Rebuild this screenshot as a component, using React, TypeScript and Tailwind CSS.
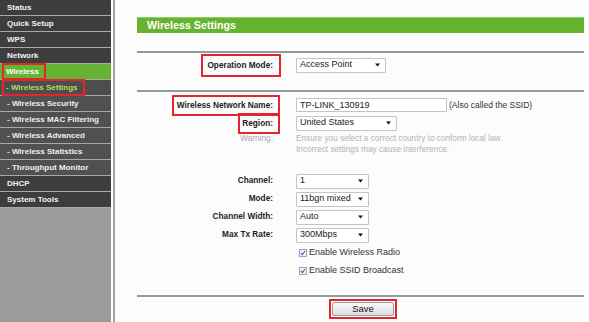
import React from 'react';

const font = { fontFamily: '"Liberation Sans", Arial, sans-serif' };

type NavItem = { label: string; sub?: boolean; active?: boolean; current?: boolean; boxed?: boolean };

const nav: NavItem[] = [
    { label: 'Status' },
    { label: 'Quick Setup' },
    { label: 'WPS' },
    { label: 'Network' },
    { label: 'Wireless', active: true, boxed: true },
    { label: '- Wireless Settings', sub: true, current: true, boxed: true },
    { label: '- Wireless Security', sub: true },
    { label: '- Wireless MAC Filtering', sub: true },
    { label: '- Wireless Advanced', sub: true },
    { label: '- Wireless Statistics', sub: true },
    { label: '- Throughput Monitor', sub: true },
    { label: 'DHCP' },
    { label: 'System Tools' },
];

const Sidebar: React.FC = () => (
    <div className="w-[111px] h-[322px] bg-[#9b9b9b] flex flex-col shrink-0">
        {nav.map((item) => {
            let bg = 'bg-[#3d3d3d] text-[#f2f2f2]';
            if (item.active) bg = 'bg-[#66b232] text-white';
            else if (item.current) bg = 'bg-[#4d4d4d] text-[#b9dc62]';
            else if (item.sub) bg = 'bg-[#505050] text-[#efefef]';
            return (
                <div key={item.label} className={`h-[16px] border-b border-[#a8a8a8] pl-[7px] flex items-center text-[8px] font-bold ${bg}`}>
                    {item.boxed ? (
                        <span className="inline-block -ml-[3px] pl-[2px] pr-[5px] leading-[13px] outline-2 outline-[#e3262e]">
                            {item.label}
                        </span>
                    ) : (
                        <span className="leading-[15px]">{item.label}</span>
                    )}
                </div>
            );
        })}
    </div>
);

const Arrow: React.FC = () => (
    <svg width="5" height="4" viewBox="0 0 5 4" className="shrink-0">
        <path d="M0 0.5h5L2.5 3.5z" fill="#111" />
    </svg>
);

const Select: React.FC<{ value: string; w: string }> = ({ value, w }) => (
    <div className={`${w} h-[15px] border border-[#c4c4c4] bg-white flex items-center justify-between pl-[3px] pr-[5px] text-[9px] text-[#222] rounded-[1px]`}>
        <span>{value}</span>
        <Arrow />
    </div>
);

const Check: React.FC<{ label: string }> = ({ label }) => (
    <div className="flex items-center gap-[2px] text-[9px] text-[#333] pl-[3px]">
        <div className="w-[8px] h-[8px] border border-[#9aa7b5] bg-[#eef2f7] flex items-center justify-center">
            <svg width="6" height="6" viewBox="0 0 6 6">
                <path d="M1 3.2l1.3 1.5L5 1" stroke="#2a5db0" strokeWidth="1.1" fill="none" />
            </svg>
        </div>
        <span>{label}</span>
    </div>
);

const Row: React.FC<{ label?: React.ReactNode; h: string; children?: React.ReactNode }> = ({ label, h, children }) => (
    <div className={`flex items-center ${h}`}>
        <div className="w-[136px] text-right text-[8.25px] font-bold text-[#222]">{label}</div>
        <div className="pl-[23px] flex items-center">{children}</div>
    </div>
);

const Boxed: React.FC<{ children: React.ReactNode; cls: string }> = ({ children, cls }) => (
    <span className={`inline-block outline-2 outline-[#e3262e] leading-[11px] ${cls}`}>{children}</span>
);

export default function App() {
    return (
        <div className="w-[589px] h-[322px] flex overflow-hidden bg-[#fcfcfc]" style={font}>
            <Sidebar />
            <div className="w-[2px] h-full bg-white" />
            <div className="w-[2px] h-full bg-[#a3a3a3]" />
            <div className="flex-1 pl-[22px] pr-[5px] pt-[17px]">
                <div className="h-[16px] bg-[#67b32f] border-t border-[#8fcf5f] flex items-center pl-[10px] text-[10.7px] font-bold text-white">
                    Wireless Settings
                </div>
                <div className="mt-[18px] h-[2px] bg-[#8d9d99]" />

                <div className="mt-[2px]">
                    <Row h="h-[20px]" label={<Boxed cls="px-[4px] py-[4px] -mr-[6px] pr-[6px]">Operation Mode:</Boxed>}>
                        <Select value="Access Point" w="w-[90px]" />
                    </Row>
                </div>

                <div className="mt-[15px] h-[2px] bg-[#8d9d99]" />

                <div className="mt-[4px]">
                    <Row h="h-[18px]" label={<Boxed cls="pl-[3px] pr-[5px] py-[3px] -mr-[5px]">Wireless Network Name:</Boxed>}>
                        <div className="w-[151px] h-[14px] border border-[#c4c4c4] bg-white pl-[3px] text-[9px] text-[#222] leading-[12px]">
                            TP-LINK_130919
                        </div>
                        <span className="ml-[2px] text-[8.5px] text-[#333]">(Also called the SSID)</span>
                    </Row>
                    <Row h="h-[18px]" label={<Boxed cls="pl-[2px] pr-[5px] py-[3px] -mr-[5px]">Region:</Boxed>}>
                        <Select value="United States" w="w-[101px]" />
                    </Row>
                    <div className="flex mt-[1px]">
                        <div className="w-[136px] text-right text-[8.25px] text-[#a9a9a9] leading-[11px]">Warning:</div>
                        <div className="pl-[23px] text-[8.25px] text-[#b3b3b3] leading-[11px]">
                            Ensure you select a correct country to conform local law.
                            <br />
                            Incorrect settings may cause interference.
                        </div>
                    </div>
                </div>

                <div className="mt-[17px]">
                    <Row h="h-[18px]" label="Channel:">
                        <Select value="1" w="w-[73px]" />
                    </Row>
                    <Row h="h-[18px]" label="Mode:">
                        <Select value="11bgn mixed" w="w-[73px]" />
                    </Row>
                    <Row h="h-[18px]" label="Channel Width:">
                        <Select value="Auto" w="w-[73px]" />
                    </Row>
                    <Row h="h-[18px]" label="Max Tx Rate:">
                        <Select value="300Mbps" w="w-[73px]" />
                    </Row>
                    <Row h="h-[18px]">
                        <Check label="Enable Wireless Radio" />
                    </Row>
                    <Row h="h-[18px]">
                        <Check label="Enable SSID Broadcast" />
                    </Row>
                </div>

                <div className="mt-[15px] h-[2px] bg-[#8d9d99]" />

                <div className="mt-[5px] flex pl-[195px]">
                    <div className="flex outline-2 outline-[#e3262e] outline-offset-[1px]">
                        <button className="w-[62px] h-[14px] border border-[#9a9a9a] rounded-[2px] bg-gradient-to-b from-[#fafafa] to-[#dcdcdc] text-[9.5px] text-[#111] leading-[12px]">
                            Save
                        </button>
                    </div>
                </div>
            </div>
        </div>
    );
}
